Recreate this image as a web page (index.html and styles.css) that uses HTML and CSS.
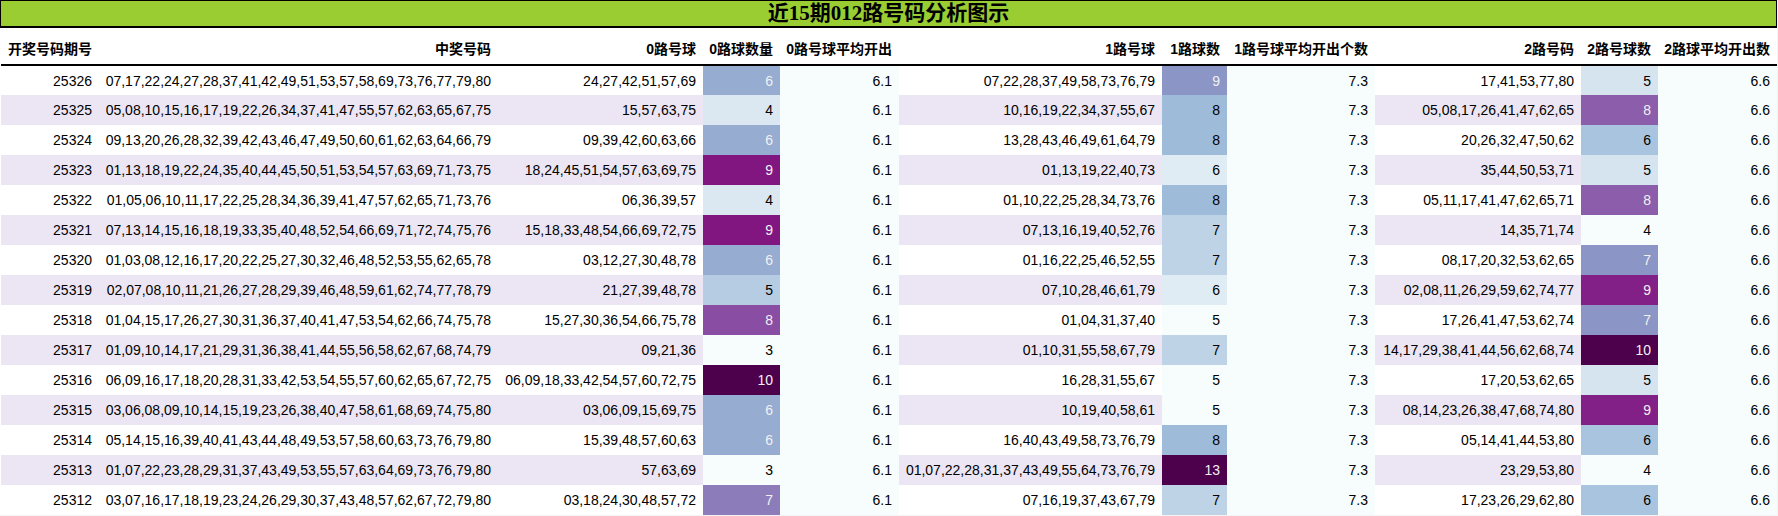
FILE: index.html
```html
<!DOCTYPE html>
<html lang="zh">
<head>
<meta charset="utf-8">
<title>近15期012路号码分析图示</title>
<link rel="stylesheet" href="styles.css">
</head>
<body>
<div class="sheet">
  <div class="title">近15期012路号码分析图示</div>
  <table class="grid">
    <colgroup>
      <col class="c-issue"><col class="c-draw"><col class="c-r0"><col class="c-n0"><col class="c-a0">
      <col class="c-r1"><col class="c-n1"><col class="c-a1"><col class="c-r2"><col class="c-n2"><col class="c-a2">
    </colgroup>
    <thead>
      <tr>
        <th>开奖号码期号</th><th>中奖号码</th><th>0路号球</th><th>0路球数量</th><th>0路号球平均开出</th>
        <th>1路号球</th><th>1路球数</th><th>1路号球平均开出个数</th><th>2路号码</th><th>2路号球数</th><th>2路球平均开出数</th>
      </tr>
    </thead>
    <tbody>
      <tr><td>25326</td><td>07,17,22,24,27,28,37,41,42,49,51,53,57,58,69,73,76,77,79,80</td><td>24,27,42,51,57,69</td><td class="lt" style="background:#96acd1">6</td><td class="avg">6.1</td><td>07,22,28,37,49,58,73,76,79</td><td class="lt" style="background:#8c96c6">9</td><td class="avg">7.3</td><td>17,41,53,77,80</td><td style="background:#d5e4ef">5</td><td class="avg">6.6</td></tr>
      <tr><td>25325</td><td>05,08,10,15,16,17,19,22,26,34,37,41,47,55,57,62,63,65,67,75</td><td>15,57,63,75</td><td style="background:#dbe8f2">4</td><td class="avg">6.1</td><td>10,16,19,22,34,37,55,67</td><td style="background:#9ebcda">8</td><td class="avg">7.3</td><td>05,08,17,26,41,47,62,65</td><td class="lt" style="background:#8b5daa">8</td><td class="avg">6.6</td></tr>
      <tr><td>25324</td><td>09,13,20,26,28,32,39,42,43,46,47,49,50,60,61,62,63,64,66,79</td><td>09,39,42,60,63,66</td><td class="lt" style="background:#96acd1">6</td><td class="avg">6.1</td><td>13,28,43,46,49,61,64,79</td><td style="background:#9ebcda">8</td><td class="avg">7.3</td><td>20,26,32,47,50,62</td><td style="background:#a9c4de">6</td><td class="avg">6.6</td></tr>
      <tr><td>25323</td><td>01,13,18,19,22,24,35,40,44,45,50,51,53,54,57,63,69,71,73,75</td><td>18,24,45,51,54,57,63,69,75</td><td class="lt" style="background:#821681">9</td><td class="avg">6.1</td><td>01,13,19,22,40,73</td><td style="background:#e0ecf4">6</td><td class="avg">7.3</td><td>35,44,50,53,71</td><td style="background:#d5e4ef">5</td><td class="avg">6.6</td></tr>
      <tr><td>25322</td><td>01,05,06,10,11,17,22,25,28,34,36,39,41,47,57,62,65,71,73,76</td><td>06,36,39,57</td><td style="background:#dbe8f2">4</td><td class="avg">6.1</td><td>01,10,22,25,28,34,73,76</td><td style="background:#9ebcda">8</td><td class="avg">7.3</td><td>05,11,17,41,47,62,65,71</td><td class="lt" style="background:#8b5daa">8</td><td class="avg">6.6</td></tr>
      <tr><td>25321</td><td>07,13,14,15,16,18,19,33,35,40,48,52,54,66,69,71,72,74,75,76</td><td>15,18,33,48,54,66,69,72,75</td><td class="lt" style="background:#821681">9</td><td class="avg">6.1</td><td>07,13,16,19,40,52,76</td><td style="background:#bfd3e6">7</td><td class="avg">7.3</td><td>14,35,71,74</td><td style="background:#f7fcfd">4</td><td class="avg">6.6</td></tr>
      <tr><td>25320</td><td>01,03,08,12,16,17,20,22,25,27,30,32,46,48,52,53,55,62,65,78</td><td>03,12,27,30,48,78</td><td class="lt" style="background:#96acd1">6</td><td class="avg">6.1</td><td>01,16,22,25,46,52,55</td><td style="background:#bfd3e6">7</td><td class="avg">7.3</td><td>08,17,20,32,53,62,65</td><td class="lt" style="background:#8c96c6">7</td><td class="avg">6.6</td></tr>
      <tr><td>25319</td><td>02,07,08,10,11,21,26,27,28,29,39,46,48,59,61,62,74,77,78,79</td><td>21,27,39,48,78</td><td style="background:#b6cce3">5</td><td class="avg">6.1</td><td>07,10,28,46,61,79</td><td style="background:#e0ecf4">6</td><td class="avg">7.3</td><td>02,08,11,26,29,59,62,74,77</td><td class="lt" style="background:#832087">9</td><td class="avg">6.6</td></tr>
      <tr><td>25318</td><td>01,04,15,17,26,27,30,31,36,37,40,41,47,53,54,62,66,74,75,78</td><td>15,27,30,36,54,66,75,78</td><td class="lt" style="background:#894da3">8</td><td class="avg">6.1</td><td>01,04,31,37,40</td><td style="background:#f7fcfd">5</td><td class="avg">7.3</td><td>17,26,41,47,53,62,74</td><td class="lt" style="background:#8c96c6">7</td><td class="avg">6.6</td></tr>
      <tr><td>25317</td><td>01,09,10,14,17,21,29,31,36,38,41,44,55,56,58,62,67,68,74,79</td><td>09,21,36</td><td style="background:#f7fcfd">3</td><td class="avg">6.1</td><td>01,10,31,55,58,67,79</td><td style="background:#bfd3e6">7</td><td class="avg">7.3</td><td>14,17,29,38,41,44,56,62,68,74</td><td class="lt" style="background:#4d004b">10</td><td class="avg">6.6</td></tr>
      <tr><td>25316</td><td>06,09,16,17,18,20,28,31,33,42,53,54,55,57,60,62,65,67,72,75</td><td>06,09,18,33,42,54,57,60,72,75</td><td class="lt" style="background:#4d004b">10</td><td class="avg">6.1</td><td>16,28,31,55,67</td><td style="background:#f7fcfd">5</td><td class="avg">7.3</td><td>17,20,53,62,65</td><td style="background:#d5e4ef">5</td><td class="avg">6.6</td></tr>
      <tr><td>25315</td><td>03,06,08,09,10,14,15,19,23,26,38,40,47,58,61,68,69,74,75,80</td><td>03,06,09,15,69,75</td><td class="lt" style="background:#96acd1">6</td><td class="avg">6.1</td><td>10,19,40,58,61</td><td style="background:#f7fcfd">5</td><td class="avg">7.3</td><td>08,14,23,26,38,47,68,74,80</td><td class="lt" style="background:#832087">9</td><td class="avg">6.6</td></tr>
      <tr><td>25314</td><td>05,14,15,16,39,40,41,43,44,48,49,53,57,58,60,63,73,76,79,80</td><td>15,39,48,57,60,63</td><td class="lt" style="background:#96acd1">6</td><td class="avg">6.1</td><td>16,40,43,49,58,73,76,79</td><td style="background:#9ebcda">8</td><td class="avg">7.3</td><td>05,14,41,44,53,80</td><td style="background:#a9c4de">6</td><td class="avg">6.6</td></tr>
      <tr><td>25313</td><td>01,07,22,23,28,29,31,37,43,49,53,55,57,63,64,69,73,76,79,80</td><td>57,63,69</td><td style="background:#f7fcfd">3</td><td class="avg">6.1</td><td>01,07,22,28,31,37,43,49,55,64,73,76,79</td><td class="lt" style="background:#4d004b">13</td><td class="avg">7.3</td><td>23,29,53,80</td><td style="background:#f7fcfd">4</td><td class="avg">6.6</td></tr>
      <tr><td>25312</td><td>03,07,16,17,18,19,23,24,26,29,30,37,43,48,57,62,67,72,79,80</td><td>03,18,24,30,48,57,72</td><td class="lt" style="background:#8c7dba">7</td><td class="avg">6.1</td><td>07,16,19,37,43,67,79</td><td style="background:#bfd3e6">7</td><td class="avg">7.3</td><td>17,23,26,29,62,80</td><td style="background:#a9c4de">6</td><td class="avg">6.6</td></tr>
    </tbody>
  </table>
</div>
</body>
</html>
```
FILE: styles.css
```css
html, body {
  margin: 0;
  padding: 0;
  background: #f4f4f4;
}

.sheet {
  width: 1777px;
  background: #ffffff;
}

.title {
  box-sizing: border-box;
  height: 28px;
  background: #9acd32;
  border: 1px solid #000000;
  border-bottom-width: 2px;
  text-align: center;
  font-family: "Liberation Serif", "Noto Sans CJK SC", serif;
  font-weight: bold;
  font-size: 21px;
  line-height: 25px;
  color: #000000;
}

.grid {
  margin-left: 1px;
  width: 1776px;
  table-layout: fixed;
  border-collapse: collapse;
  border-spacing: 0;
  font-family: "Liberation Sans", "Noto Sans CJK SC", sans-serif;
  font-size: 14px;
  color: #000000;
}

.c-issue { width: 98px; }
.c-draw { width: 399px; }
.c-r0 { width: 205px; }
.c-n0 { width: 77px; }
.c-a0 { width: 119px; }
.c-r1 { width: 263px; }
.c-n1 { width: 65px; }
.c-a1 { width: 148px; }
.c-r2 { width: 206px; }
.c-n2 { width: 77px; }
.c-a2 { width: 119px; }

.grid th {
  box-sizing: border-box;
  height: 37px;
  padding: 4px 7px 0 0;
  text-align: right;
  font-weight: bold;
  font-size: 14px;
  white-space: nowrap;
  border-bottom: 2px solid #000000;
  background: #ffffff;
}

.grid td {
  box-sizing: border-box;
  height: 30px;
  padding: 0 7px 0 0;
  text-align: right;
  white-space: nowrap;
  vertical-align: middle;
}

.grid tbody tr:nth-child(even) {
  background: #ece6f4;
}

.grid td.avg {
  background: #f7fcfd;
}

.grid td.lt {
  color: #f1f1f1;
}
```
